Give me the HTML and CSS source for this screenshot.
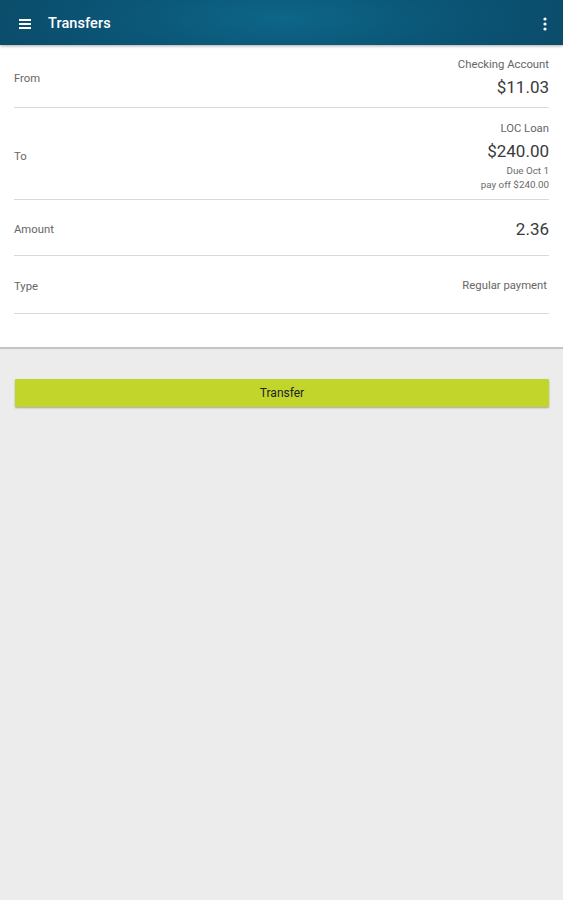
FILE: index.html
```html
<!DOCTYPE html>
<html>
<head>
<meta charset="utf-8">
<link rel="stylesheet" href="styles.css">
</head>
<body>
<header class="appbar">
  <svg class="menu" width="12" height="10" viewBox="0 0 12 10"><rect x="0" y="0" width="12" height="2" fill="#fff"/><rect x="0" y="4" width="12" height="2" fill="#fff"/><rect x="0" y="8" width="12" height="2" fill="#fff"/></svg>
  <div class="title">Transfers</div>
  <svg class="kebab" width="4" height="14" viewBox="0 0 4 14"><circle cx="2" cy="2" r="1.6" fill="#fff"/><circle cx="2" cy="7" r="1.6" fill="#fff"/><circle cx="2" cy="12" r="1.6" fill="#fff"/></svg>
</header>
<main class="form">
  <div class="row row-from">
    <div class="label">From</div>
    <div class="value">
      <div class="small">Checking Account</div>
      <div class="big">$11.03</div>
    </div>
  </div>
  <div class="row row-to">
    <div class="label">To</div>
    <div class="value">
      <div class="small">LOC Loan</div>
      <div class="big">$240.00</div>
      <div class="tiny t1">Due Oct 1</div>
      <div class="tiny t2">pay off $240.00</div>
    </div>
  </div>
  <div class="row row-amount">
    <div class="label">Amount</div>
    <div class="value">
      <div class="big nomargin">2.36</div>
    </div>
  </div>
  <div class="row row-type">
    <div class="label">Type</div>
    <div class="value">
      <div class="small pad-right">Regular payment</div>
    </div>
  </div>
  <div class="spacer"></div>
</main>
<div class="actions">
  <button class="btn">Transfer</button>
</div>
</body>
</html>
```

FILE: styles.css
```css
html, body {
  margin: 0;
  padding: 0;
  height: 100%;
}
body {
  background: #ececec;
  font-family: Roboto, "Liberation Sans", sans-serif;
}
.appbar {
  height: 45px;
  display: flex;
  align-items: center;
  background: radial-gradient(ellipse 60% 180% at 50% 40%, #0d6688 0%, #0b5576 50%, #0a4966 100%);
  box-shadow: 0 1px 3px rgba(0,0,0,0.35);
  position: relative;
  z-index: 2;
}
.menu {
  margin-left: 19px;
  margin-top: 2px;
  display: block;
}
.title {
  margin-left: 17px;
  margin-top: 2px;
  color: #fff;
  font-size: 14.5px;
  font-weight: 500;
  flex: 1;
  letter-spacing: 0.1px;
}
.kebab {
  margin-right: 16px;
  margin-top: 2px;
  display: block;
}
.form {
  background: #fff;
  border-bottom: 2px solid #c4c4c4;
}
.row {
  margin: 0 14px;
  display: flex;
  justify-content: space-between;
  align-items: center;
  border-bottom: 1px solid #dadada;
}
.label {
  font-size: 11.3px;
  color: #666;
}
.value {
  text-align: right;
}
.small {
  font-size: 11.3px;
  line-height: 14px;
  color: #666;
}
.pad-right {
  padding-right: 2px;
}
.big {
  font-size: 17px;
  line-height: 22px;
  color: #3a3a3a;
  margin-top: 4px;
}
.big.nomargin {
  margin-top: 0;
}
.tiny {
  font-size: 9.8px;
  line-height: 12px;
  color: #6a6a6a;
}
.t1 { margin-top: 3px; }
.t2 { margin-top: 2px; }
.row-from { padding: 13px 0 9px; }
.row-to { padding: 14px 0 8px; }
.row-amount { padding: 18px 0 15px; }
.row-type { padding: 23px 0 20px; }
.spacer { height: 33px; }
.actions {
  padding: 30px 14px 0 15px;
}
.btn {
  display: block;
  width: 100%;
  height: 28px;
  border: none;
  border-radius: 1px;
  background: #c2d52b;
  color: #222;
  font-family: Roboto, "Liberation Sans", sans-serif;
  font-size: 12px;
  box-shadow: 0 1px 2px rgba(0,0,0,0.3);
  padding: 0;
}
```
